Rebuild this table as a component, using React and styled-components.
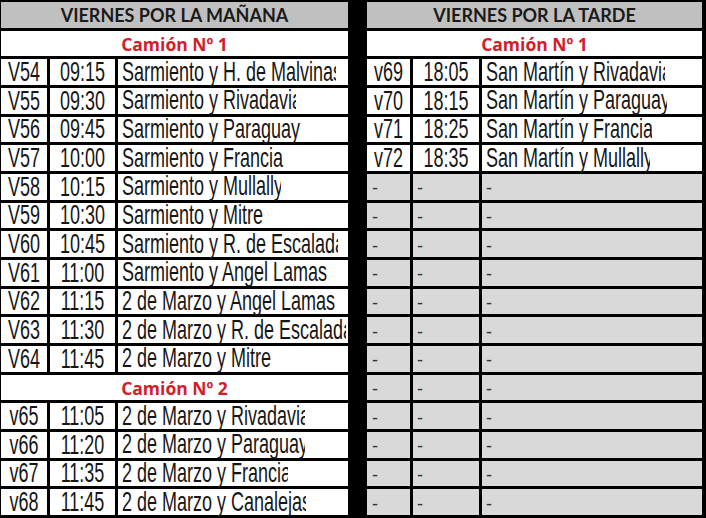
import React from 'react';
import styled, { createGlobalStyle } from 'styled-components';

const Global = createGlobalStyle`
  html, body { margin: 0; padding: 0; background: #000; }
  #root { width: 706px; height: 518px; }
`;

const Page = styled.div`
  display: flex;
  gap: 19px;
  padding: 2px 0 0 1px;
  width: 706px;
  height: 518px;
  box-sizing: border-box;
  background: #000;
  overflow: hidden;
`;

const Table = styled.div`
  display: grid;
  grid-template-columns: ${(p) => p.$cols};
  grid-template-rows: repeat(18, 1fr);
  gap: 3px;
  width: ${(p) => p.$width}px;
  height: 513px;
`;

const HeadCell = styled.div`
  grid-column: 1 / -1;
  display: flex;
  align-items: center;
  justify-content: center;
  background: ${(p) => (p.$truck ? '#ffffff' : '#c0c0c0')};
  color: ${(p) => (p.$truck ? '#d2202b' : '#1a1a1a')};
  font-family: ${(p) => (p.$truck ? '"Open Sans", Lato' : 'Lato, "Open Sans"')}, sans-serif;
  font-weight: 700;
  font-size: ${(p) => (p.$truck ? '17.5px' : '18px')};
  padding-top: 1px;
`;

const Cell = styled.div`
  display: flex;
  align-items: center;
  justify-content: ${(p) => (p.$center ? 'center' : 'flex-start')};
  padding-left: ${(p) => (p.$center ? 0 : p.$pad)}px;
  background: ${(p) => (p.$empty ? '#d9d9d9' : '#ffffff')};
  min-width: 0;
`;

const Clip = styled.span`
  display: inline-block;
  clip-path: ${(p) =>
    p.$clip
      ? `polygon(0 -20px, ${p.$clip}px -20px, ${p.$clip}px 40px, 0 40px)`
      : 'none'};
`;

const Text = styled.span`
  display: inline-block;
  white-space: nowrap;
  font-family: "Liberation Sans", Arial, sans-serif;
  font-size: 18px;
  line-height: 18px;
  color: #161616;
  transform: scaleY(1.55);
  transform-origin: center 52%;
`;

const Dash = styled.span`
  font-family: "Liberation Sans", Arial, sans-serif;
  font-size: 18px;
  line-height: 18px;
  color: #333;
  padding-top: 3px;
`;

const morning1 = [
  ['V54', '09:15', 'Sarmiento y H. de Malvinas', 214],
  ['V55', '09:30', 'Sarmiento y Rivadavia', 174],
  ['V56', '09:45', 'Sarmiento y Paraguay', 211],
  ['V57', '10:00', 'Sarmiento y Francia', 164],
  ['V58', '10:15', 'Sarmiento y Mullally', 159],
  ['V59', '10:30', 'Sarmiento y Mitre', 0],
  ['V60', '10:45', 'Sarmiento y R. de Escalada', 216],
  ['V61', '11:00', 'Sarmiento y Angel Lamas', 0],
  ['V62', '11:15', '2 de Marzo y Angel Lamas', 0],
  ['V63', '11:30', '2 de Marzo y R. de Escalada', 224],
  ['V64', '11:45', '2 de Marzo y Mitre', 0],
];

const morning2 = [
  ['v65', '11:05', '2 de Marzo y Rivadavia', 183],
  ['v66', '11:20', '2 de Marzo y Paraguay', 183],
  ['v67', '11:35', '2 de Marzo y Francia', 166],
  ['v68', '11:45', '2 de Marzo y Canalejas', 184],
];

const afternoon = [
  ['v69', '18:05', 'San Martín y Rivadavia', 179],
  ['v70', '18:15', 'San Martín y Paraguay', 181],
  ['v71', '18:25', 'San Martín y Francia', 166],
  ['v72', '18:35', 'San Martín y Mullally', 164],
];

function Row({ row }) {
  const [code, time, place, clip] = row;
  return (
    <>
      <Cell $center>
        <Text>{code}</Text>
      </Cell>
      <Cell $center>
        <Text>{time}</Text>
      </Cell>
      <Cell $pad={4}>
        <Clip $clip={clip}>
          <Text>{place}</Text>
        </Clip>
      </Cell>
    </>
  );
}

function EmptyRow() {
  return (
    <>
      <Cell $empty $pad={5}><Dash>-</Dash></Cell>
      <Cell $empty $pad={4}><Dash>-</Dash></Cell>
      <Cell $empty $pad={4}><Dash>-</Dash></Cell>
    </>
  );
}

export default function App() {
  return (
    <>
      <Global />
      <Page>
        <Table $cols="46px 65px 230px" $width={347}>
          <HeadCell>VIERNES POR LA MAÑANA</HeadCell>
          <HeadCell $truck>Camión Nº 1</HeadCell>
          {morning1.map((r) => (
            <Row key={r[0]} row={r} />
          ))}
          <HeadCell $truck>Camión Nº 2</HeadCell>
          {morning2.map((r) => (
            <Row key={r[0]} row={r} />
          ))}
        </Table>
        <Table $cols="43px 66px 220px" $width={335}>
          <HeadCell>VIERNES POR LA TARDE</HeadCell>
          <HeadCell $truck>Camión Nº 1</HeadCell>
          {afternoon.map((r) => (
            <Row key={r[0]} row={r} />
          ))}
          {Array.from({ length: 12 }, (_, i) => (
            <EmptyRow key={i} />
          ))}
        </Table>
      </Page>
    </>
  );
}
